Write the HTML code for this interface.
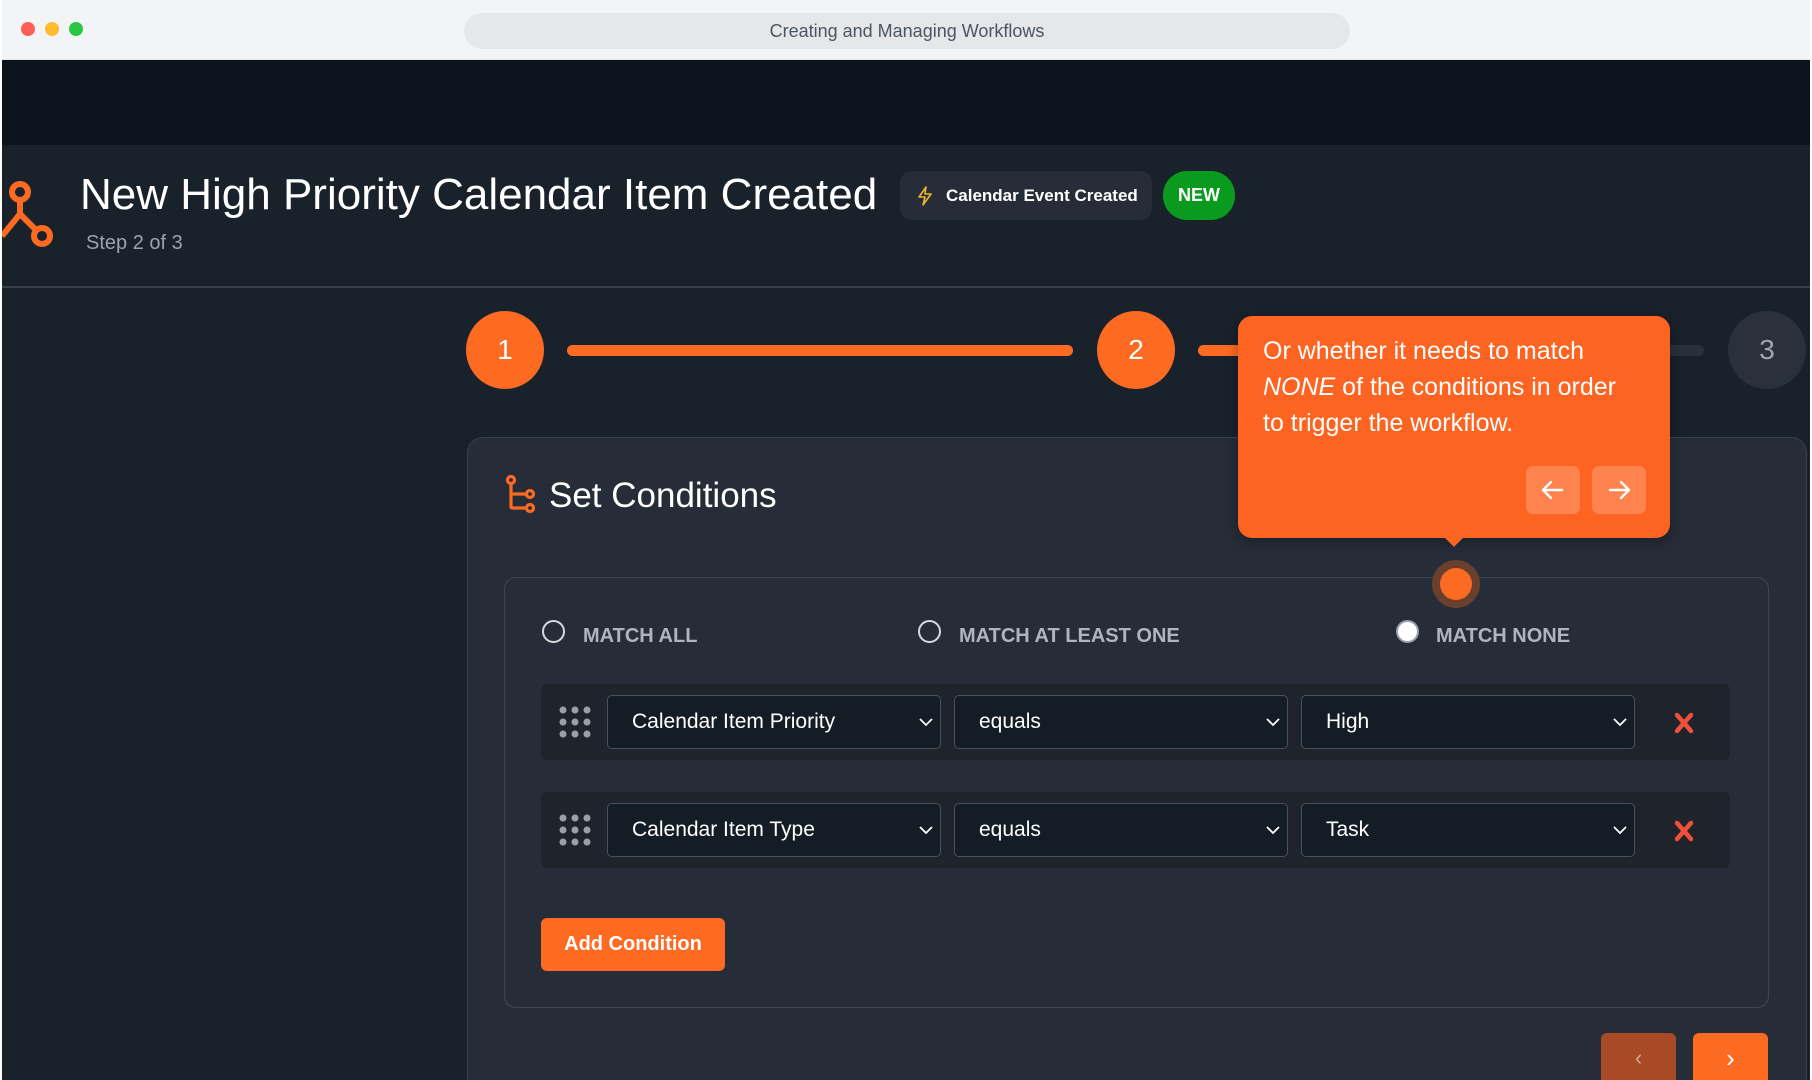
<!DOCTYPE html>
<html><head><meta charset="utf-8"><style>
*{box-sizing:border-box;margin:0;padding:0}
html,body{width:1812px;height:1080px;overflow:hidden}
body{background:#fff;font-family:"Liberation Sans",sans-serif;position:relative}
.abs{position:absolute}
.win{left:2px;top:0;width:1808px;height:1080px;background:#19212b;overflow:hidden}
.tb{left:0;top:0;width:1808px;height:60px;background:#f3f4f6;border-bottom:1px solid #e2e4e8}
.dot{top:22px;width:14px;height:14px;border-radius:50%}
.url{left:462px;top:13px;width:886px;height:36px;border-radius:18px;background:#e5e7eb;color:#4b5563;font-size:18px;text-align:center;line-height:36px}
.sel{height:54px;background:#141c26;border:1.5px solid #4a515c;border-radius:5px;color:#fff;font-size:21px;line-height:51px;padding-left:24px}
.sel svg{position:absolute;right:6px;top:20px}
.row{left:539px;width:1189px;height:76px;background:#1f242c;border-radius:6px}
.radio{width:23px;height:23px;border-radius:50%;border:2px solid #d6d9de}
.rl{color:#b0b5bd;font-size:20px;font-weight:bold}
</style></head><body>
<div class="abs win">
 <div class="abs tb">
  <div class="abs dot" style="left:19px;background:#fe5f57"></div>
  <div class="abs dot" style="left:43px;background:#febc2e"></div>
  <div class="abs dot" style="left:67px;background:#28c840"></div>
  <div class="abs url">Creating and Managing Workflows</div>
 </div>
 <div class="abs" style="left:0;top:60px;width:1808px;height:85px;background:#0c141d"></div>
 <div class="abs" style="left:0;top:286px;width:1808px;height:2px;background:#3a4049"></div>
 <svg class="abs" style="left:-4px;top:178px" width="60" height="72" viewBox="0 0 60 72"><g fill="none" stroke="#fd6a22" stroke-width="6"><circle cx="22" cy="14" r="8"/><circle cx="44" cy="58" r="8"/><path d="M22 22 V36 L38 52 M22 36 L4 58"/></g></svg>
 <div class="abs" style="left:78px;top:169px;color:#fff;font-size:44px;line-height:52px">New High Priority Calendar Item Created</div>
 <div class="abs" style="left:84px;top:232px;color:#9ca3af;font-size:20px">Step 2 of 3</div>
 <div class="abs" style="left:898px;top:171px;width:252px;height:49px;border-radius:12px;background:#262d38;color:#fff;font-size:17px;font-weight:bold;line-height:49px;padding-left:46px">Calendar Event Created
  <svg class="abs" style="left:16px;top:15px" width="18" height="20" viewBox="0 0 18 20"><path d="M10 1 L3 11 H9 L7 19 L15 8 H9 Z" fill="none" stroke="#f0b429" stroke-width="1.6" stroke-linejoin="round"/></svg></div>
 <div class="abs" style="left:1161px;top:171px;width:72px;height:49px;border-radius:24px;background:#0a9a1e;color:#fff;font-size:18px;font-weight:bold;line-height:49px;text-align:center">NEW</div>

 <div class="abs" style="left:565px;top:345px;width:506px;height:11px;border-radius:6px;background:#fd6a22"></div>
 <div class="abs" style="left:1196px;top:345px;width:506px;height:11px;border-radius:6px;background:#2a313b"></div>
 <div class="abs" style="left:1196px;top:345px;width:60px;height:11px;border-radius:6px;background:#fd6a22"></div>
 <div class="abs" style="left:464px;top:311px;width:78px;height:78px;border-radius:50%;background:#fd6a22;color:#fff;font-size:28px;text-align:center;line-height:78px">1</div>
 <div class="abs" style="left:1095px;top:311px;width:78px;height:78px;border-radius:50%;background:#fd6a22;color:#fff;font-size:28px;text-align:center;line-height:78px">2</div>
 <div class="abs" style="left:1726px;top:311px;width:78px;height:78px;border-radius:50%;background:#2a313b;color:#a0a6ae;font-size:28px;text-align:center;line-height:78px">3</div>

 <div class="abs" style="left:465px;top:437px;width:1340px;height:643px;border-radius:16px 16px 0 0;background:#262d38;border:1.5px solid #3a414c;border-bottom:none"></div>
 <svg class="abs" style="left:502px;top:474px" width="34" height="42" viewBox="0 0 34 42"><g fill="none" stroke="#fd6a22" stroke-width="3.2"><circle cx="7" cy="6" r="3.5"/><circle cx="26" cy="20" r="3.5"/><circle cx="26" cy="34" r="3.5"/><path d="M7 10 V32 Q7 34 9 34 H22 M7 20 H22"/></g></svg>
 <div class="abs" style="left:547px;top:474px;color:#fff;font-size:35px;line-height:44px">Set Conditions</div>

 <div class="abs" style="left:502px;top:577px;width:1265px;height:431px;border-radius:12px;border:1.5px solid #3f4650"></div>
 <div class="abs radio" style="left:540px;top:620px"></div><div class="abs rl" style="left:581px;top:625px">MATCH ALL</div>
 <div class="abs radio" style="left:916px;top:620px"></div><div class="abs rl" style="left:957px;top:625px">MATCH AT LEAST ONE</div>
 <div class="abs radio" style="left:1394px;top:620px;background:#fff;border-color:#9aa0a8"></div><div class="abs rl" style="left:1434px;top:625px">MATCH NONE</div>

 <div class="abs row" style="top:684px"></div>
 <div class="abs row" style="top:792px"></div>
 <svg class="abs" style="left:556px;top:705px" width="34" height="34"><g fill="#9aa0a8"><circle cx="5" cy="5" r="3.5"/><circle cx="17" cy="5" r="3.5"/><circle cx="29" cy="5" r="3.5"/><circle cx="5" cy="17" r="3.5"/><circle cx="17" cy="17" r="3.5"/><circle cx="29" cy="17" r="3.5"/><circle cx="5" cy="29" r="3.5"/><circle cx="17" cy="29" r="3.5"/><circle cx="29" cy="29" r="3.5"/></g></svg>
 <svg class="abs" style="left:556px;top:813px" width="34" height="34"><g fill="#9aa0a8"><circle cx="5" cy="5" r="3.5"/><circle cx="17" cy="5" r="3.5"/><circle cx="29" cy="5" r="3.5"/><circle cx="5" cy="17" r="3.5"/><circle cx="17" cy="17" r="3.5"/><circle cx="29" cy="17" r="3.5"/><circle cx="5" cy="29" r="3.5"/><circle cx="17" cy="29" r="3.5"/><circle cx="29" cy="29" r="3.5"/></g></svg>

 <div class="abs sel" style="left:605px;top:695px;width:334px">Calendar Item Priority<svg width="16" height="12"><path d="M2 3 L8 9 L14 3" fill="none" stroke="#fff" stroke-width="1.8"/></svg></div>
 <div class="abs sel" style="left:952px;top:695px;width:334px">equals<svg width="16" height="12"><path d="M2 3 L8 9 L14 3" fill="none" stroke="#fff" stroke-width="1.8"/></svg></div>
 <div class="abs sel" style="left:1299px;top:695px;width:334px">High<svg width="16" height="12"><path d="M2 3 L8 9 L14 3" fill="none" stroke="#fff" stroke-width="1.8"/></svg></div>
 <div class="abs sel" style="left:605px;top:803px;width:334px">Calendar Item Type<svg width="16" height="12"><path d="M2 3 L8 9 L14 3" fill="none" stroke="#fff" stroke-width="1.8"/></svg></div>
 <div class="abs sel" style="left:952px;top:803px;width:334px">equals<svg width="16" height="12"><path d="M2 3 L8 9 L14 3" fill="none" stroke="#fff" stroke-width="1.8"/></svg></div>
 <div class="abs sel" style="left:1299px;top:803px;width:334px">Task<svg width="16" height="12"><path d="M2 3 L8 9 L14 3" fill="none" stroke="#fff" stroke-width="1.8"/></svg></div>
 <svg class="abs" style="left:1672px;top:712px" width="20" height="22"><path d="M3 3 L17 19 M17 3 L3 19" stroke="#f0503a" stroke-width="4.5" stroke-linecap="round"/></svg>
 <svg class="abs" style="left:1672px;top:820px" width="20" height="22"><path d="M3 3 L17 19 M17 3 L3 19" stroke="#f0503a" stroke-width="4.5" stroke-linecap="round"/></svg>

 <div class="abs" style="left:539px;top:918px;width:184px;height:53px;border-radius:6px;background:#fd6a22;color:#fff;font-size:20px;font-weight:bold;text-align:center;line-height:53px">Add Condition</div>
 <div class="abs" style="left:1599px;top:1033px;width:75px;height:47px;border-radius:6px 6px 0 0;background:#a84a25;color:#d9a48a;font-size:22px;text-align:center;line-height:50px">‹</div>
 <div class="abs" style="left:1691px;top:1033px;width:75px;height:47px;border-radius:6px 6px 0 0;background:#fd6a22;color:#fff;font-size:26px;text-align:center;line-height:50px">›</div>

 <div class="abs" style="left:1430px;top:560px;width:48px;height:48px;border-radius:50%;background:#6b3f2e"></div>
 <div class="abs" style="left:1438px;top:568px;width:32px;height:32px;border-radius:50%;background:#fd6a22"></div>

 <div class="abs" style="left:1236px;top:316px;width:432px;height:222px;border-radius:14px;background:#fd6422;box-shadow:0 4px 14px rgba(0,0,0,.3)"></div>
 <div class="abs" style="left:1445px;top:530px;width:14px;height:14px;background:#fd6422;transform:rotate(45deg)"></div>
 <div class="abs" style="left:1261px;top:333px;color:#fff;font-size:25px;line-height:36px;width:370px">Or whether it needs to match <i>NONE</i> of the conditions in order to trigger the workflow.</div>
 <div class="abs" style="left:1524px;top:466px;width:54px;height:48px;border-radius:7px;background:#ff834e"></div>
 <div class="abs" style="left:1590px;top:466px;width:54px;height:48px;border-radius:7px;background:#ff834e"></div>
 <svg class="abs" style="left:1538px;top:479px" width="26" height="22"><path d="M22 11 H4 M11 3 L3 11 L11 19" fill="none" stroke="#fff" stroke-width="2.4" stroke-linecap="round" stroke-linejoin="round"/></svg>
 <svg class="abs" style="left:1604px;top:479px" width="26" height="22"><path d="M4 11 H22 M15 3 L23 11 L15 19" fill="none" stroke="#fff" stroke-width="2.4" stroke-linecap="round" stroke-linejoin="round"/></svg>
</div>
</body></html>
